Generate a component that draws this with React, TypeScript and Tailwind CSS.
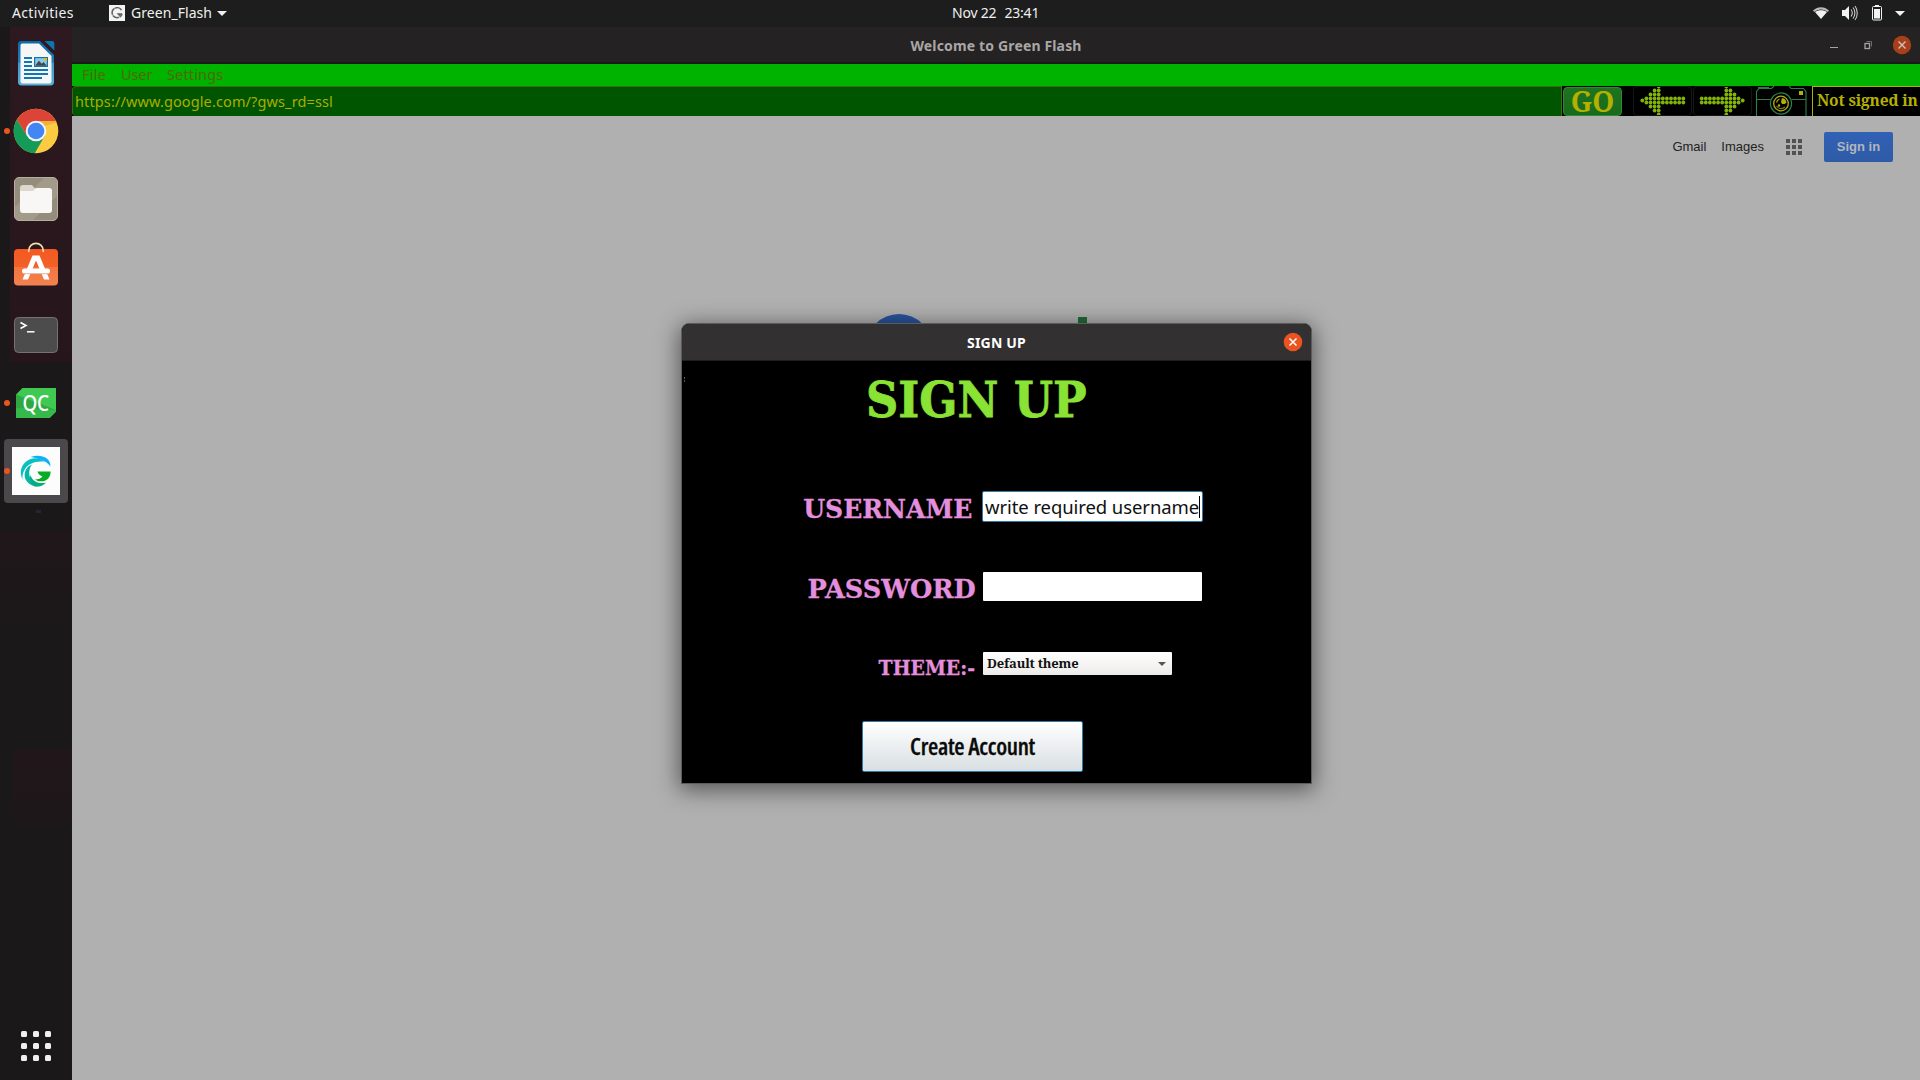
import type { ReactNode } from "react";

function WriterIcon() {
  return (
    <svg width="44" height="48" viewBox="14 39 44 48">
      <defs>
        <linearGradient id="writer" x1="0" y1="0" x2="0" y2="1">
          <stop offset="0" stopColor="#0d6aa6" />
          <stop offset="0.48" stopColor="#1f7db6" />
          <stop offset="0.5" stopColor="#3f98cb" />
          <stop offset="1" stopColor="#55aedb" />
        </linearGradient>
      </defs>
      <path d="M21 41h19l14 14v27a3.4 3.4 0 0 1-3.4 3.4H21.400a3.400 3.400 0 0 1-3.400-3.400V44.400A3.400 3.400 0 0 1 21 41z" fill="url(#writer)" />
      <path d="M22 43.500h17L51.500 56v25.500a2 2 0 0 1-2 2H22.500a2 2 0 0 1-2-2V45.500a2 2 0 0 1 1.500-2z" fill="#f6f6f6" />
      <path d="M44.500 41h7.500a2.300 2.300 0 0 1 2.300 2.300V50.500z" fill="#1272ae" />
      <path d="M24 58h8M24 62h8M24 66h8M24 70h24M24 74h24M24 78h18" stroke="#1176b4" strokeWidth="1.800" />
      <rect x="34" y="57" width="14" height="10" fill="#1176b4" />
      <rect x="35.200" y="58.200" width="11.600" height="7.600" fill="#8cc8ea" />
      <path d="M35.200 65.800l3.600-5 3 3 1.800-1.800 3.200 3.800z" fill="#444" />
      <path d="M43.500 58.200h3.300v3a3.300 3.300 0 0 1-3.300-3z" fill="#f2b705" />
    </svg>
  );
}

function ChromeIcon() {
  return (
    <svg width="46" height="46" viewBox="-23 -23 46 46">
      <circle r="22.300" fill="#fdcb42" />
      <path d="M0-10H19.950A22.300 22.300 0 0 0-19.310-11.150L-8.660 5z" fill="#dc4437" />
      <path d="M-19.310-11.150A22.300 22.300 0 0 0-1.200 22.300L8.660 5-8.660 5z" fill="#159b58" />
      <path d="M0-10H19.950l.6 1.500L8-5z" fill="#e9a32b" opacity="0.6" />
      <circle r="10.300" fill="#f3f3f3" />
      <circle r="8.300" fill="#4285f4" />
    </svg>
  );
}

function FilesIcon() {
  return (
    <svg width="44" height="44" viewBox="0 0 44 44">
      <rect x="0.500" y="0.500" width="43" height="43" rx="4.500" fill="#948d7b" stroke="#b5afa0" />
      <path d="M1 30L30 1h9a4 4 0 0 1 4 4v14L19 43H5a4 4 0 0 1-4-4z" fill="#a29b8a" />
      <path d="M6 11a3 3 0 0 1 3-3h9l3 3.500h14a3 3 0 0 1 3 3V20H6z" fill="#dcd8ce" />
      <path d="M6 14h13l3-3h13a3 3 0 0 1 3 3v19a3 3 0 0 1-3 3H9a3 3 0 0 1-3-3z" fill="#f8f7f5" />
    </svg>
  );
}

function SoftwareIcon() {
  return (
    <svg width="44" height="44" viewBox="14 242 44 44">
      <defs>
        <linearGradient id="bag" x1="0" y1="0" x2="0" y2="1">
          <stop offset="0" stopColor="#f35a22" />
          <stop offset="0.49" stopColor="#f26128" />
          <stop offset="0.5" stopColor="#f3743f" />
          <stop offset="1" stopColor="#f3824f" />
        </linearGradient>
      </defs>
      <rect x="14" y="249" width="44" height="36.500" rx="4" fill="url(#bag)" />
      <path d="M28.800 252v-1.500a7.200 7.200 0 0 1 14.400 0v1.500" fill="none" stroke="#f1dcae" strokeWidth="1.700" />
      <path d="M32.500 255.500h7l10 24h-5.500L36 260.500l-8 19h-5.500z" fill="#fff" />
      <rect x="22" y="268.500" width="28" height="5.200" rx="2.600" fill="#fff" />
      <path d="M24 273.700h24" stroke="#d9a58c" strokeWidth="0.800" />
    </svg>
  );
}

function TerminalIcon() {
  return (
    <svg width="44" height="36" viewBox="0 0 44 36">
      <rect x="0.500" y="0.500" width="43" height="35" rx="4" fill="#4c4c4c" stroke="#737373" />
      <path d="M6.500 5.500l5.500 3-5.500 3" fill="none" stroke="#fff" strokeWidth="1.600" />
      <path d="M13 14.800h7.500" stroke="#fff" strokeWidth="1.500" />
    </svg>
  );
}

function QtCreatorIcon() {
  return (
    <div className="relative grid h-[30px] w-10 place-items-center">
      <svg className="absolute inset-0" width="40" height="30" viewBox="0 0 40 30">
        <path d="M6.500 0H40v23.500L33.500 30H0V6.500z" fill="#3fc953" />
        <path d="M0 6.500L40 22v1.500L33.500 30H0z" fill="#2fa843" />
        <path d="M0 20l40 2v1.500L33.500 30H0z" fill="#35b94a" />
      </svg>
      <span className="relative font-['Noto_Sans'] text-[21px] font-medium leading-[30px] tracking-[-0.300px] text-white [transform:scaleX(0.9)]">QC</span>
    </div>
  );
}

function GreenFlashIcon() {
  return (
    <div className="grid size-16 place-items-center rounded-[4px] bg-[#4a484a]">
      <div className="grid size-12 place-items-center bg-[#fcfcfc]">
        <svg width="32" height="32" viewBox="0 0 32 32">
          <path d="M10.500 2C16.500 0 24 .5 28 4.500c1.700 1.800 2.500 4.500 2.500 7C28 8 25 6 22 5.200 18 4 15 2.500 10.500 2z" fill="#0eb0fa" />
          <path d="M25.500 7C19 2 11 1.800 5.500 7 0 12 0 19 2.500 24.500c-.5-6 2-12.500 8-15.500 5-2.500 10-2.800 15-2z" fill="#08bfc4" />
          <path d="M12 9.500C6.500 11.500 3.800 17 5 23c1.500 4.500 6.500 8.500 12.500 8.500-4-2.500-7-6-8-10.500-.8-4.500 0-8.500 2.500-11.500z" fill="#04b8a6" />
          <path d="M10.500 20c1.500 6 7.500 9.500 15.500 7.500-3 3.500-7 4.500-11 4-4.500-1.500-6-7-4.500-11.500z" fill="#05ab84" />
          <path d="M17.500 16.500H30.500c.3 3.500-1.500 7.500-5 9-4 1.500-7.500 1-10.500-1 3.500 0 6-1 7.500-3-2-.5-4.500-2.500-5-5z" fill="#06ac22" />
        </svg>
      </div>
    </div>
  );
}

function DockItem({ running, children }: { running?: boolean; children: ReactNode }) {
  return (
    <div className="relative flex h-[68px] w-full items-center justify-center">
      {children}
      {running && <span className="absolute left-1 top-[31px] size-1.5 rounded-full bg-[#e95420]" />}
    </div>
  );
}

function Dock() {
  return (
    <nav className="relative flex w-[72px] shrink-0 flex-col items-center bg-[#1a1819] pt-[2px]">
      <div className="absolute left-[10px] right-0 top-0 h-[335px] bg-gradient-to-b from-[#2d191f] to-[#26161b]" />
      <div className="absolute inset-x-0 top-[504px] h-[100px] bg-gradient-to-b from-[#21171a] to-[#1a1819]" />
      <div className="absolute left-[13px] right-0 top-[722px] h-[76px] rounded-l-xl bg-gradient-to-b from-[#21171a] to-[#1d1719]" />
      <div className="absolute left-9 top-[483px] h-[3px] w-[5px] bg-[#22263a]" />
      <DockItem><WriterIcon /></DockItem>
      <DockItem running><ChromeIcon /></DockItem>
      <DockItem><FilesIcon /></DockItem>
      <DockItem><div className="-mt-1.5"><SoftwareIcon /></div></DockItem>
      <DockItem><TerminalIcon /></DockItem>
      <DockItem running><QtCreatorIcon /></DockItem>
      <DockItem running><GreenFlashIcon /></DockItem>
      <div className="mb-[19px] mt-auto grid grid-cols-3 gap-1.5">
        {Array.from({ length: 9 }, (_, i) => (
          <span key={i} className="size-1.5 rounded-[1.500px] bg-[#f0f0f0]" />
        ))}
      </div>
    </nav>
  );
}

function TopBar() {
  return (
    <header className="flex h-[27px] items-center bg-[#1d1d1d] pb-0.5 font-['Noto_Sans'] text-[14px] leading-[25px] text-[#f0f0f0]">
      <div className="flex w-[952px] items-center pl-3">
        <span className="w-[97px] tracking-[0.350px]">Activities</span>
        <span className="mr-1.5 grid size-4 place-items-center bg-[#f4f4f4]">
          <svg width="12" height="12" viewBox="0 0 12 12" fill="none" stroke="#666">
            <path d="M10.500 3.200A5 5 0 1 0 11 7" strokeWidth="1.600" strokeDasharray="7 .6" />
            <path d="M6 6.500h5L8.500 9z" fill="#555" strokeWidth="0.500" />
          </svg>
        </span>
        <span className="tracking-[0.050px]">Green_Flash</span>
        <svg className="ml-[5px] mt-0.5" width="10" height="5" viewBox="0 0 10 5"><path d="M0 0h10L5 5z" fill="#f0f0f0" /></svg>
      </div>
      <div className="flex gap-2 tracking-[-0.200px]">
        <span>Nov 22</span>
        <span>23:41</span>
      </div>
      <div className="ml-auto flex items-center pr-[15px]">
        <svg width="92" height="16" viewBox="1813 5 92 16" fill="#f2f2f2">
          <path d="M1813 10.500C1817.500 6 1824.500 6 1829 10.500L1827.800 12C1823.500 8.500 1818.500 8.500 1814.200 12z" fill="#b9b9b9" />
          <path d="M1815 12c3.500-2.500 8.500-2.500 12 0l-6 7z" />
          <path d="M1842 10h3l4-4v14l-4-4h-3z" />
          <path d="M1851 9.500c1.500 2 1.500 5 0 7M1853 7.500c2.500 3 2.500 8 0 11M1855 6c3 4 3 10 0 14" fill="none" stroke="#c8c8c8" strokeWidth="1.100" />
          <path d="M1875 5h4v1.500h-4z" />
          <rect x="1872.500" y="6.500" width="9" height="13.500" rx="1" fill="none" stroke="#f2f2f2" />
          <rect x="1874" y="9" width="6" height="9.500" />
          <path d="M1895 11h10l-5 5z" />
        </svg>
      </div>
    </header>
  );
}

function TitleBar() {
  return (
    <div className="grid h-[37px] grid-cols-[1fr_auto_1fr] items-center border-b-2 border-[#1b1a1a] bg-[#242223]">
      <span />
      <h1 className="font-['Noto_Sans'] text-[14px] font-bold leading-[37px] tracking-[0.150px] text-[#a9a7a6]">Welcome to Green Flash</h1>
      <div className="flex items-center justify-end pr-2">
        <svg className="-mt-px" width="83" height="20" viewBox="1829 35 83 20" fill="none" stroke="#a5a5a5">
          <path d="M1830 47.500h8" />
          <path d="M1866.500 41.500h5v5" stroke="#6c6c6c" />
          <rect x="1865" y="43.500" width="4.500" height="5" strokeWidth="1.300" />
          <circle cx="1902" cy="45" r="9.200" fill="#a83f1b" stroke="none" />
          <path d="M1898.500 41.500l7 7m0-7l-7 7" stroke="#cfc3be" strokeWidth="1.400" />
        </svg>
      </div>
    </div>
  );
}

const arrowColumns = [1, 2, 4, 6, 8, 2, 2, 2, 2, 2, 2];

function DotArrow({ flip }: { flip?: boolean }) {
  return (
    <div className="h-[30px] w-[59px] rounded border border-[#161616]">
      <svg className={flip ? "-scale-x-100" : ""} width="57" height="28" viewBox="0 0 57 28">
        {arrowColumns.map((n, c) =>
          Array.from({ length: n }, (_, r) => (
            <circle key={c + "-" + r} cx={8.300 + c * 4.100} cy={13.500 + (r - (n - 1) / 2) * 4} r="1.900" fill="#82b30b" />
          ))
        )}
      </svg>
    </div>
  );
}

function CameraIcon() {
  return (
    <svg width="52" height="30" viewBox="1755 86 52 30" fill="none" stroke="#2a8049" strokeWidth="1.100">
      <path d="M1756.500 116V91.500l2.500-3h12.500l2.500-2.500M1789 86l2 2.500h12.500l2.500 3V116" />
      <path d="M1756.500 99.500h14M1791.500 99.500h14.500" />
      <path d="M1758.500 88.500v-1h10v1" />
      <circle cx="1781" cy="103.500" r="10.600" />
      <circle cx="1781" cy="103.500" r="7.300" stroke="#b5ae08" strokeWidth="1.300" />
      <path d="M1782 98a5.500 5.500 0 0 1 4.500 4.500l-1.800 1.500h-2.700l-1-2z" fill="#b5ae08" stroke="none" />
      <circle cx="1779" cy="105.500" r="1.200" fill="#b5ae08" stroke="none" />
      <path d="M1776.500 102.500a5 5 0 0 1 3-3.500" stroke="#b5ae08" />
      <path d="M1776.500 106a5.500 5.500 0 0 0 8.500 1" stroke="#7d7a08" />
      <rect x="1799" y="91" width="4" height="4" fill="#b5ae08" stroke="none" />
    </svg>
  );
}

function BrowserToolbar() {
  return (
    <div className="flex h-[30px] items-stretch bg-black">
      <div className="flex w-[1490px] items-center rounded-l-sm border-x border-t border-[#3f6a10] bg-[#005600] pb-px pl-[2px] font-['Noto_Sans'] text-[14.500px] leading-[28px] tracking-[0.120px] text-[#abad00]">
        https://www.google.com/?gws_rd=ssl
      </div>
      <button className="ml-px mt-px flex h-[29px] w-[59px] items-center justify-center rounded-sm border border-[#2b8a32] bg-gradient-to-b from-[#1e741f] to-[#1a691b] font-['Noto_Serif'] text-[28px] font-bold leading-[27px] text-[#b3b000]">
        GO
      </button>
      <div className="ml-[11px] flex">
        <DotArrow />
        <div className="ml-px"><DotArrow flip /></div>
      </div>
      <div className="ml-[3px] w-[53px]"><CameraIcon /></div>
      <div className="ml-auto flex w-[108px] items-center border-l border-t border-[#b5ae08] pb-[3px] pl-1 font-['Noto_Serif'] text-[15.500px] font-bold leading-[26px] tracking-[-0.150px] text-[#b3b000]">
        <span className="whitespace-nowrap">Not signed in</span>
      </div>
    </div>
  );
}

function GoogleHeader() {
  return (
    <div className="flex items-center justify-end pr-[27px] pt-4 font-['Liberation_Sans'] text-[13px] leading-[30px] text-[#222]">
      <span>Gmail</span>
      <span className="ml-[15px]">Images</span>
      <div className="ml-[22px] grid grid-cols-3 gap-[2px]">
        {Array.from({ length: 9 }, (_, i) => (
          <span key={i} className="size-1 bg-[#525252]" />
        ))}
      </div>
      <button className="ml-[22px] h-[30px] w-[69px] rounded-[2px] bg-gradient-to-b from-[#3161b6] to-[#2f5ba6] text-[13px] font-bold text-[#b2b6bd]">Sign in</button>
    </div>
  );
}

const label =
  "flex items-center justify-end whitespace-nowrap font-['DejaVu_Serif'] font-bold text-[#e38fdd] [-webkit-text-stroke:0.300px_#e38fdd]";

function SignUpDialog() {
  return (
    <section className="absolute left-[681px] top-[323px] w-[631px] rounded-t-[8px] border border-[#5c5c5c] bg-black shadow-[0_4px_22px_2px_rgba(0,0,0,0.500)]">
      <div className="grid h-[37px] grid-cols-[1fr_auto_1fr] items-center rounded-t-[7px] border-b border-[#1f1e1e] bg-[#323030]">
        <span />
        <h2 className="pt-px font-['Noto_Sans'] text-[14px] font-bold leading-9 tracking-[0.200px] text-white">SIGN UP</h2>
        <svg className="mb-px ml-auto mr-2" width="20" height="20" viewBox="-10 -10 20 20">
          <circle r="9.300" fill="#e95420" />
          <path d="M-3.500-3.500l7 7m0-7l-7 7" stroke="#fff" strokeWidth="1.500" />
        </svg>
      </div>
      <div className="relative h-[422px]">
        <span className="absolute left-[2px] top-4 h-[5px] w-px border-y-2 border-[#555]" />
        <div className="flex h-[130px] pl-[184px] pt-[9px]">
          <span className="origin-left whitespace-nowrap font-['DejaVu_Serif'] text-[49px] font-bold leading-[60px] text-[#8ae234] [-webkit-text-stroke:0.800px_#8ae234] [transform:scaleX(0.913)]">SIGN UP</span>
        </div>
        <div className="grid grid-cols-[294px_1fr] gap-x-[6px]">
          <label className={label + " h-[31px] pr-1 pt-1.5 text-[26px]"}>
            <span className="origin-right [transform:scaleX(0.965)]">USERNAME</span>
          </label>
          <div className="flex h-[31px] w-[221px] items-center rounded-[2px] border border-[#2e7ba8] bg-white pl-[2px] font-['Noto_Sans'] text-[18.500px] leading-[29px] tracking-[-0.080px] text-[#111]">
            <span className="whitespace-nowrap">write required username</span>
            <span className="h-[22px] w-px shrink-0 bg-black" />
          </div>
          <label className={label + " mt-[50px] h-[29px] pt-[5px] text-[26px]"}>
            <span className="origin-right [transform:scaleX(0.985)]">PASSWORD</span>
          </label>
          <div className="ml-px mt-[50px] h-[29px] w-[219px] rounded-[1px] bg-white" />
          <label className={label + " mt-[51px] h-[23px] pr-px pt-[9px] text-[20px]"}>
            <span className="origin-right [transform:scaleX(0.945)]">THEME:-</span>
          </label>
          <div className="ml-px mt-[51px] flex h-[23px] w-[189px] items-center justify-between rounded-[1px] bg-gradient-to-b from-white to-[#edebe9] pl-1 pr-1.5 font-['Noto_Serif'] text-[13px] font-bold leading-[23px] tracking-[-0.200px] text-[#111]">
            <span>Default theme</span>
            <svg width="8" height="4" viewBox="0 0 8 4"><path d="M0 0h8L4 4z" fill="#555" /></svg>
          </div>
        </div>
        <button className="ml-[180px] mt-[46px] flex h-[51px] w-[221px] items-center justify-center rounded-[2px] border border-[#2e7ba8] bg-gradient-to-b from-white to-[#d8dfe2] font-['Open_Sans'] text-[23.500px] font-semibold tracking-[-0.300px] text-[#0a0a0a] [font-stretch:75%] [-webkit-text-stroke:0.300px_#0a0a0a]">
          Create Account
        </button>
      </div>
    </section>
  );
}

export default function App() {
  return (
    <div className="relative flex h-[1080px] w-[1920px] flex-col overflow-hidden bg-[#b0b0b0]">
      <TopBar />
      <div className="flex min-h-0 flex-1">
        <Dock />
        <main className="flex min-w-0 flex-1 flex-col">
          <TitleBar />
          <div className="flex h-[22px] items-start bg-[#00b300] pl-[10px] font-['Noto_Sans'] text-[14.500px] leading-[20px] text-[#4f6a00]">
            <span className="w-[39px] tracking-[0.200px]">File</span>
            <span className="w-[46px] tracking-[-0.100px]">User</span>
            <span className="tracking-[0.150px]">Settings</span>
          </div>
          <BrowserToolbar />
          <div className="relative flex-1">
            <GoogleHeader />
            <div className="absolute left-[794px] top-[198px] size-[66px] rounded-full bg-[#28549d]" />
            <div className="absolute left-[1006px] top-[201px] h-16 w-[9px] bg-[#1f6c37]" />
          </div>
        </main>
      </div>
      <SignUpDialog />
    </div>
  );
}
